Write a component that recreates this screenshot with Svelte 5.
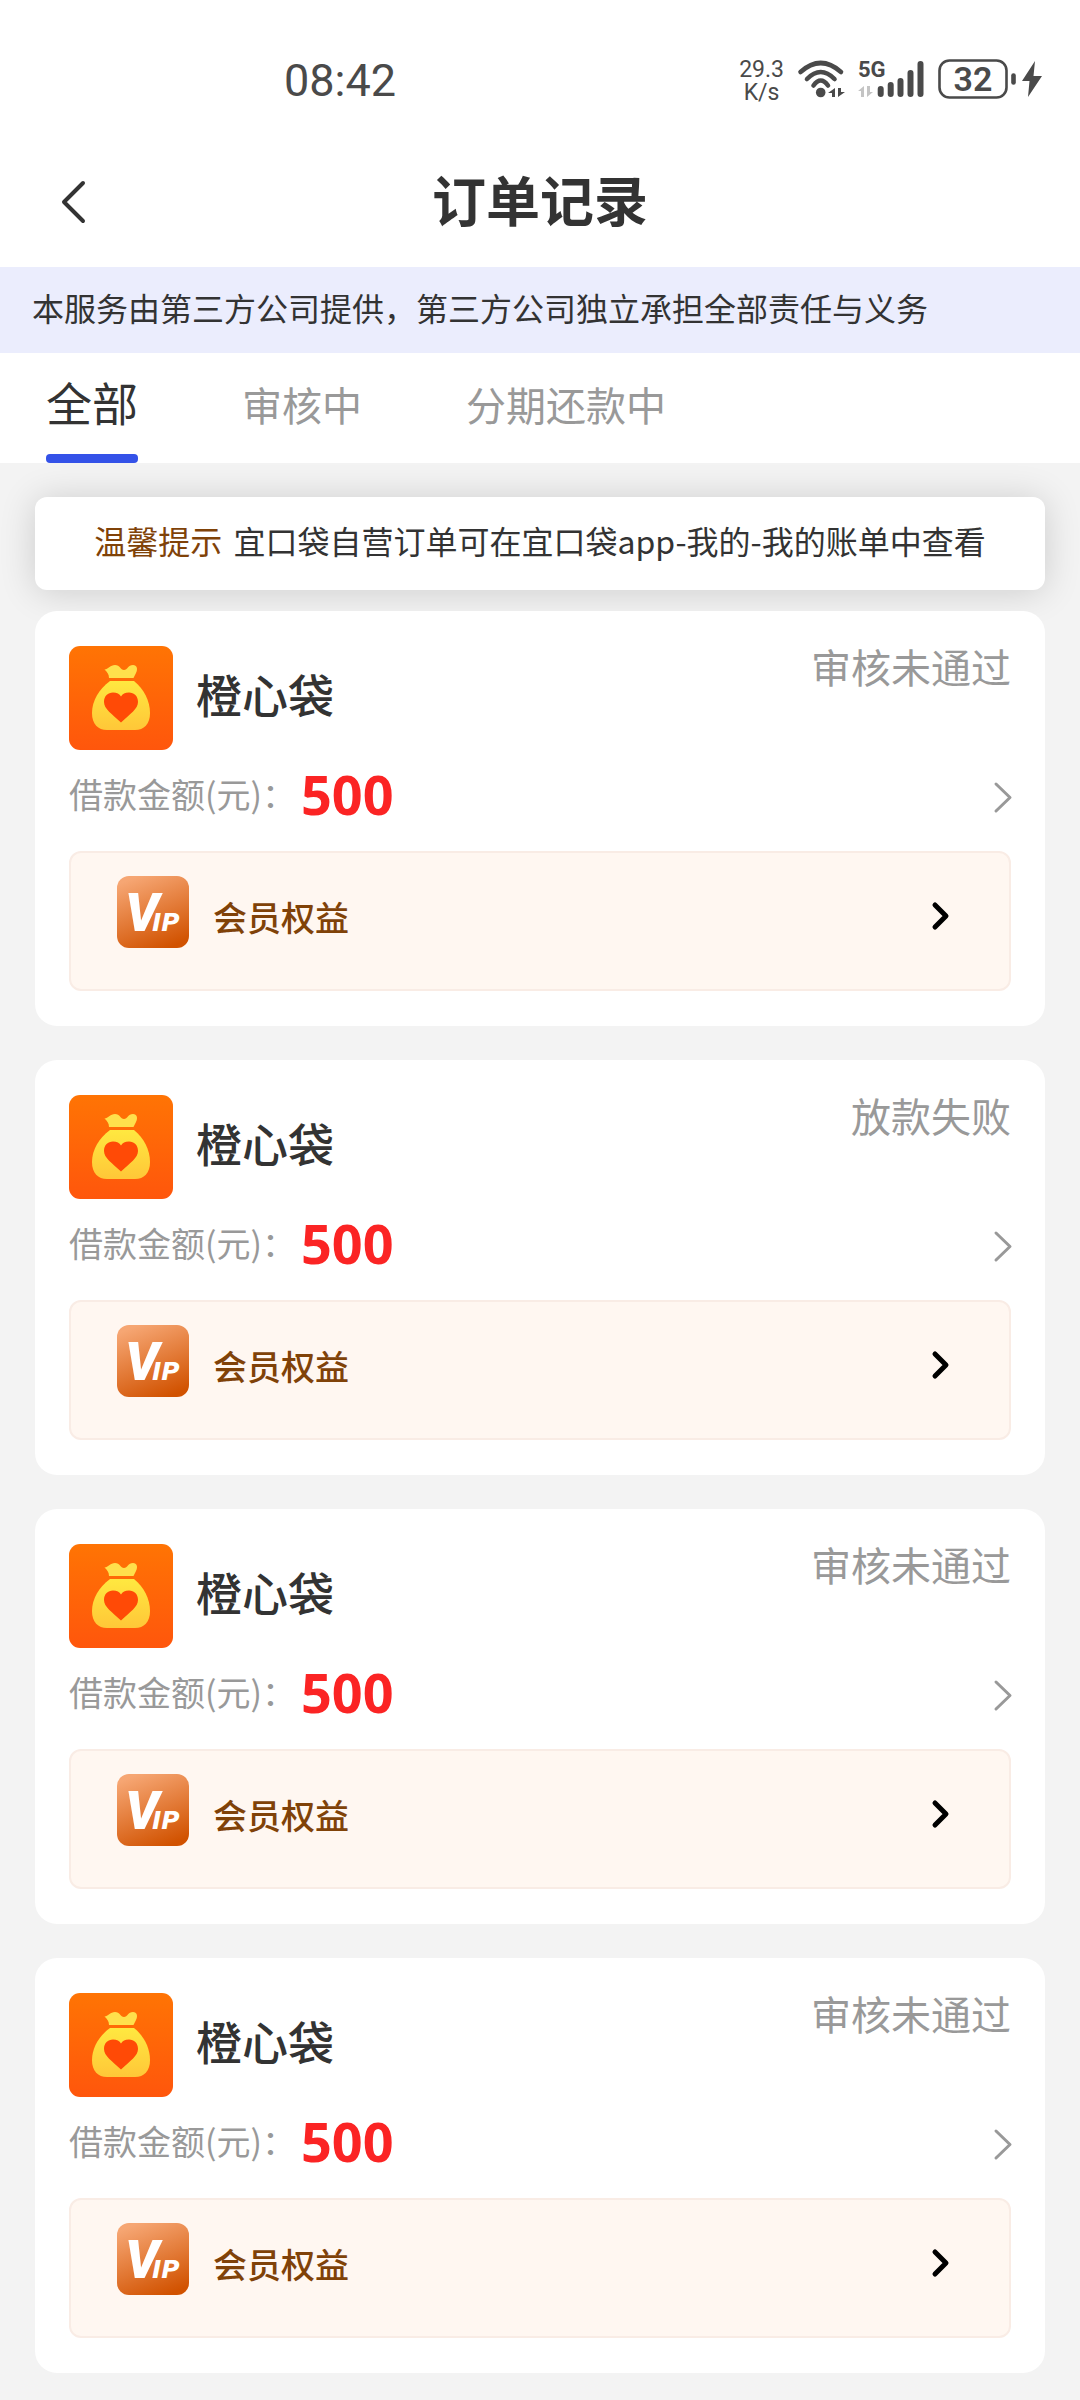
<script>
  let activeTab = $state("all");

  const tabs = [
    { id: "all", label: "全部" },
    { id: "review", label: "审核中" },
    { id: "repay", label: "分期还款中" }
  ];

  const orders = [
    { id: 1, name: "橙心袋", amount: 500, status: "审核未通过" },
    { id: 2, name: "橙心袋", amount: 500, status: "放款失败" },
    { id: 3, name: "橙心袋", amount: 500, status: "审核未通过" },
    { id: 4, name: "橙心袋", amount: 500, status: "审核未通过" }
  ];
</script>

<div class="page">
  <div class="status-bar">
    <time class="clock">08:42</time>
    <div class="indicators">
      <div class="speed"><span>29.3</span><span>K/s</span></div>

      <svg class="wifi" width="48" height="40" viewBox="0 0 48 40">
        <g fill="none" stroke="#4a4a4a" stroke-width="4.6" stroke-linecap="round">
          <path d="M2.5 13 Q22.7 -5 43 13" />
          <path d="M9 20 Q22.7 6 36.5 20" />
          <path d="M15.5 26.5 Q22.7 16.5 30 26.5" />
        </g>
        <circle cx="22.7" cy="33.5" r="4.8" fill="#4a4a4a" />
        <path d="M30 34l7-5v9h-3v-4zM47 33l-7 5v-9h3v4z" fill="#4a4a4a" />
      </svg>

      <svg class="signal" width="66" height="40" viewBox="0 0 66 40">
        <text x="0" y="18" class="net">5G</text>
        <path d="M0 32l6-5v11H3v-6zM15 33l-6 5V27h3v6z" fill="#c4c4c4" />
        <g stroke="#4a4a4a" stroke-width="6" stroke-linecap="round">
          <path d="M22.7 30v5M32.7 26v9M42.5 22v13M52.5 14v21M62.5 5v30" />
        </g>
      </svg>

      <svg class="battery" width="104" height="40" viewBox="0 0 104 40">
        <rect x="1.5" y="1.5" width="67" height="37" rx="10" fill="none" stroke="#4a4a4a" stroke-width="2.6" />
        <text x="35" y="32" text-anchor="middle" class="level">32</text>
        <path d="M75.5 16.5v7" stroke="#4a4a4a" stroke-width="4.6" stroke-linecap="round" />
        <path d="M97 2L84 22h7.5l-1.500 16 14-21h-8.500z" fill="#4a4a4a" />
      </svg>
    </div>
  </div>

  <header class="nav">
    <button class="back" aria-label="返回">
      <svg width="28" height="46" viewBox="0 0 28 46" fill="none" stroke="#333" stroke-width="4" stroke-linecap="round" stroke-linejoin="round">
        <path d="M24 4L5 23l19 19" />
      </svg>
    </button>
    <h1>订单记录</h1>
  </header>

  <p class="service">本服务由第三方公司提供，第三方公司独立承担全部责任与义务</p>

  <nav class="tabs">
    {#each tabs as tab (tab.id)}
      <button class="tab" class:active={activeTab === tab.id} onclick={() => (activeTab = tab.id)}>
        {tab.label}
      </button>
    {/each}
  </nav>

  <main>
    <p class="notice"><strong>温馨提示</strong> 宜口袋自营订单可在宜口袋app-我的-我的账单中查看</p>

    {#each orders as order (order.id)}
      <article class="card">
        <div class="card-head">
          <svg class="logo" width="104" height="104" viewBox="0 0 104 104">
            <defs>
              <linearGradient id="tile{order.id}" x1="0" y1="0" x2="0" y2="1">
                <stop offset="0" stop-color="#ff7404" />
                <stop offset="1" stop-color="#ff560c" />
              </linearGradient>
              <linearGradient id="bag{order.id}" x1="0" y1="0" x2="0" y2="1">
                <stop offset="0" stop-color="#ffe840" />
                <stop offset="1" stop-color="#ffc738" />
              </linearGradient>
            </defs>
            <rect width="104" height="104" rx="11" fill="url(#tile{order.id})" />
            <path d="M35.5 23.5C40 23 41 19 46 19c5 0 5.500 5 9 5s4-5 9-5c4 0 5 4 3 8l-2.500 5H40c0-4-2-6-4.500-8.500z" fill="#ffe04c" />
            <path d="M41 35h24c10 8 16 20 16 32 0 11-6 17-15 17H38c-9 0-15-6-15-17 0-12 7-24 18-32z" fill="url(#bag{order.id})" />
            <path d="M52 76.5C43 68 35 63 35 56c0-6 4-9.500 9-9.500 4 0 6.500 1.500 8 4 1.500-2.500 4-4 8-4 5 0 9 3.500 9 9.500 0 7-8 12-17 20.500z" fill="#ff4a06" />
          </svg>
          <h2>{order.name}</h2>
          <span class="status">{order.status}</span>
        </div>

        <a class="amount-row" href="#order-{order.id}">
          <span class="label">借款金额(元)：</span>
          <span class="amount">{order.amount}</span>
          <svg width="20" height="32" viewBox="0 0 20 32" fill="none" stroke="#999" stroke-width="3" stroke-linecap="round" stroke-linejoin="round">
            <path d="M5 4l14 13.500L5 31" />
          </svg>
        </a>

        <a class="vip" href="#vip-{order.id}">
          <svg width="72" height="72" viewBox="0 0 72 72">
            <defs>
              <linearGradient id="vip{order.id}" x1="0.3" y1="0" x2="0.7" y2="1">
                <stop offset="0" stop-color="#f6a673" />
                <stop offset="1" stop-color="#d15200" />
              </linearGradient>
            </defs>
            <rect width="72" height="72" rx="12" fill="url(#vip{order.id})" />
            <text x="8" y="55" class="vip-mark">V<tspan class="vip-ip" x="35">IP</tspan></text>
          </svg>
          <span>会员权益</span>
          <svg width="20" height="64" viewBox="0 0 20 64" fill="none" stroke="#000" stroke-width="5" stroke-linecap="round" stroke-linejoin="round">
            <path d="M4 21l11 11L4 43" />
          </svg>
        </a>
      </article>
    {/each}
  </main>
</div>

<style>
  :global(body) {
    background: #f3f3f3;
  }

  .page {
    min-height: 100vh;
    background: #f3f3f3;
    color: #333;
    font-family: "Noto Sans CJK SC", sans-serif;
  }

  h1,
  h2,
  p {
    margin: 0;
    font-weight: 500;
  }

  button {
    padding: 0;
    border: none;
    background: none;
    font-family: inherit;
    cursor: pointer;
  }

  a {
    color: inherit;
    text-decoration: none;
  }

  svg {
    display: block;
    flex: none;
    overflow: visible;
  }

  .status-bar {
    display: flex;
    align-items: center;
    justify-content: space-between;
    height: 158px;
    padding: 0 38px 0 284px;
    box-sizing: border-box;
    background: #fff;
    color: #4a4a4a;
    font-family: Roboto, sans-serif;
  }

  .clock {
    padding-top: 2px;
    font-size: 45px;
  }

  .indicators {
    display: flex;
    align-items: center;
  }

  .speed {
    display: flex;
    flex-direction: column;
    align-items: center;
    margin-right: 14px;
    padding-top: 4px;
    font-size: 23px;
    line-height: 23px;
  }

  .signal {
    margin: 0 14px 0 12px;
  }

  .net {
    font-size: 22px;
    font-weight: 700;
    fill: #4a4a4a;
  }

  .level {
    font-size: 34px;
    font-weight: 600;
    fill: #4a4a4a;
  }

  .nav {
    display: grid;
    grid-template-columns: 120px 1fr 120px;
    align-items: start;
    height: 109px;
    background: #fff;
  }

  .back {
    display: flex;
    padding: 21px 0 0 59px;
  }

  h1 {
    font-size: 54px;
    font-weight: 700;
    line-height: 82px;
    text-align: center;
  }

  .service {
    padding: 15px 32px 21px;
    background: #ebedfd;
    font-size: 32px;
    font-weight: 400;
    line-height: 50px;
  }

  .tabs {
    display: flex;
    gap: 104px;
    height: 110px;
    padding: 0 46px;
    background: #fff;
  }

  .tab {
    position: relative;
    padding-bottom: 8px;
    color: #999;
    font-size: 40px;
    line-height: 102px;
  }

  .tab.active {
    padding-bottom: 14px;
    color: #333;
    font-size: 46px;
    line-height: 96px;
  }

  .tab.active::after {
    content: "";
    position: absolute;
    left: 0;
    right: 0;
    bottom: 0;
    height: 9px;
    border-radius: 4px;
    background: #3452e8;
  }

  main {
    padding: 34px 35px 26px;
  }

  .notice {
    margin-bottom: 21px;
    padding: 18px 20px 25px;
    border-radius: 12px;
    background: #fff;
    box-shadow: 0 2px 36px rgba(0, 0, 0, 0.16);
    font-size: 32px;
    font-weight: 400;
    line-height: 50px;
    text-align: center;
  }

  .notice strong {
    margin-right: 4px;
    color: #804208;
    font-weight: 400;
  }

  .card {
    position: relative;
    padding: 35px 34px;
    border-radius: 22px;
    background: #fff;
  }

  .card + .card {
    margin-top: 34px;
  }

  .card-head {
    display: flex;
    align-items: flex-start;
    gap: 23px;
  }

  h2 {
    flex: 1;
    font-size: 46px;
    line-height: 94px;
  }

  .status {
    color: #999;
    font-size: 40px;
    line-height: 40px;
  }

  .amount-row {
    display: flex;
    align-items: center;
    height: 88px;
    margin-bottom: 13px;
  }

  .label {
    padding-bottom: 2px;
    color: #999;
    font-size: 34px;
  }

  .amount {
    flex: 1;
    margin-left: 5px;
    color: #fb2424;
    font-family: "Noto Sans", sans-serif;
    font-size: 54px;
    font-weight: 700;
  }

  .amount-row svg {
    margin-top: 4px;
  }

  .vip {
    display: flex;
    align-items: flex-end;
    padding: 23px 58px 41px 46px;
    border: 2px solid #f9ece5;
    border-radius: 12px;
    background: #fff7f1;
    color: #804208;
    font-size: 34px;
    font-weight: 500;
    line-height: 62px;
  }

  .vip span {
    flex: 1;
    margin-left: 24px;
  }

  .vip-mark {
    fill: #fff;
    font-family: Roboto, sans-serif;
    font-size: 53px;
    font-style: italic;
    font-weight: 900;
  }

  .vip-ip {
    font-family: "DejaVu Sans", sans-serif;
    font-size: 25px;
    font-weight: 700;
  }
</style>
